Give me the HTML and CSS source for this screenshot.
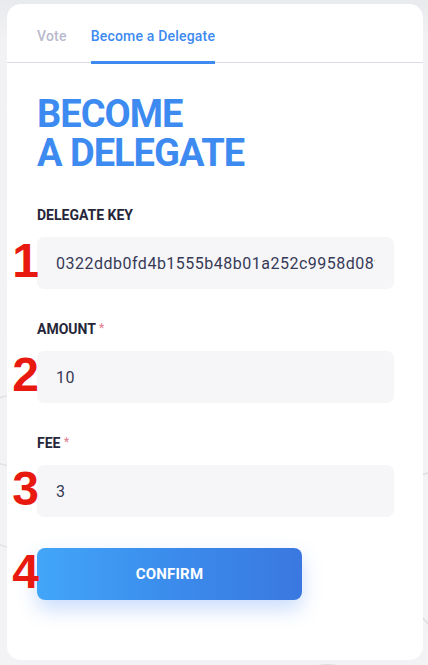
FILE: index.html
```html
<!DOCTYPE html>
<html lang="en">
<head>
<meta charset="utf-8">
<title>Become a Delegate</title>
<link rel="stylesheet" href="styles.css">
</head>
<body>
<svg class="bg-deco" width="428" height="665" viewBox="0 0 428 665" aria-hidden="true">
  <path d="M-40 420 Q 10 380 60 400" fill="none" stroke="#e2e2e6" stroke-width="1.5"/>
  <path d="M-40 450 Q 10 470 40 470" fill="none" stroke="#e2e2e6" stroke-width="1.5"/>
  <path d="M-20 540 Q 10 545 30 560" fill="none" stroke="#e2e2e6" stroke-width="1.5"/>
  <path d="M270 700 Q 330 630 380 700" fill="none" stroke="#dedee3" stroke-width="2"/>
  <path d="M300 700 Q 330 650 360 700" fill="none" stroke="#e2e2e6" stroke-width="1.5"/>
  <path d="M400 600 Q 420 610 440 640" fill="none" stroke="#dedee3" stroke-width="1.5"/>
  <path d="M400 480 L 440 470" fill="none" stroke="#dedee3" stroke-width="1.5"/>
</svg>
<main class="card">
  <nav class="tabs">
    <span class="tab">Vote</span>
    <span class="tab tab-active">Become a Delegate</span>
  </nav>
  <section class="content">
    <h1 class="title"><span class="title-line">BECOME</span><span class="title-line">A DELEGATE</span></h1>
    <form class="form">
      <div class="field">
        <label class="label">DELEGATE KEY</label>
        <div class="control">
          <span class="marker">1</span>
          <input class="input" type="text" value="0322ddb0fd4b1555b48b01a252c9958d08f4e7a1b3c2">
        </div>
      </div>
      <div class="field">
        <label class="label">AMOUNT <span class="req">*</span></label>
        <div class="control">
          <span class="marker">2</span>
          <input class="input" type="text" value="10">
        </div>
      </div>
      <div class="field">
        <label class="label">FEE <span class="req">*</span></label>
        <div class="control">
          <span class="marker">3</span>
          <input class="input" type="text" value="3">
        </div>
      </div>
      <div class="control control-btn">
        <span class="marker">4</span>
        <button class="btn" type="button">CONFIRM</button>
      </div>
    </form>
  </section>
</main>
</body>
</html>
```

FILE: styles.css
```css
* { box-sizing: border-box; }

html, body {
  margin: 0;
  height: 100%;
}

body {
  position: relative;
  background: linear-gradient(180deg, #e9eaed 0px, #f2f2f4 40px, #f3f3f5 100%);
  font-family: Roboto, "Noto Sans", sans-serif;
  padding: 4px 5px 0 7px;
  overflow: hidden;
}

.bg-deco {
  position: absolute;
  left: 0;
  top: 0;
}

.card {
  position: relative;
  background: #ffffff;
  border-radius: 14px;
  height: 656px;
  width: 416px;
}

.tabs {
  display: flex;
  gap: 24px;
  padding: 24px 30px 0;
  border-bottom: 1px solid #dcdce8;
}

.tab {
  position: relative;
  font-size: 14px;
  line-height: 16px;
  font-weight: 500;
  letter-spacing: 0.2px;
  color: #b9b9cc;
  padding-bottom: 18px;
}

.tab-active {
  color: #3d8af0;
}

.tab-active::after {
  content: "";
  position: absolute;
  left: 0;
  right: 0;
  bottom: -2px;
  height: 3px;
  background: #3d8af0;
}

.content {
  padding: 0 29px 0 30px;
}

.title {
  margin: 35px 0 0;
  display: flex;
  flex-direction: column;
  gap: 7px;
  font-size: 38px;
  line-height: 32px;
  font-weight: 700;
  letter-spacing: -1px;
  color: #3d8af0;
}

.title-line {
  display: block;
}

.form {
  margin-top: 38px;
  display: flex;
  flex-direction: column;
  gap: 31px;
}

.field {
  display: flex;
  flex-direction: column;
  gap: 14px;
}

.label {
  font-size: 14px;
  line-height: 16px;
  font-weight: 700;
  color: #26263a;
}

.req {
  color: #e27a8c;
  font-weight: 400;
  font-size: 12px;
  vertical-align: 2px;
}

.control {
  position: relative;
}

.marker {
  position: absolute;
  right: calc(100% - 2px);
  top: -2px;
  font-family: "Liberation Sans", Arial, sans-serif;
  font-weight: 700;
  font-size: 48px;
  line-height: 52px;
  color: #e8190f;
  pointer-events: none;
  z-index: 1;
}

.input {
  display: block;
  width: 100%;
  height: 52px;
  border: none;
  border-radius: 7px;
  background: #f6f6f8;
  padding: 0 19px;
  font-family: Roboto, "Noto Sans", sans-serif;
  font-size: 16px;
  letter-spacing: 0.5px;
  color: #363a57;
  outline: none;
}

.control-btn {
  align-self: flex-start;
}

.btn {
  display: block;
  width: 265px;
  height: 52px;
  border: none;
  border-radius: 8px;
  background: linear-gradient(90deg, #42a6f8 0%, #3b8cec 50%, #3a78e0 100%);
  box-shadow: 0 9px 20px rgba(61, 130, 240, 0.28);
  color: #ffffff;
  font-family: Roboto, "Noto Sans", sans-serif;
  font-weight: 700;
  font-size: 15px;
  letter-spacing: 0.2px;
}
```
